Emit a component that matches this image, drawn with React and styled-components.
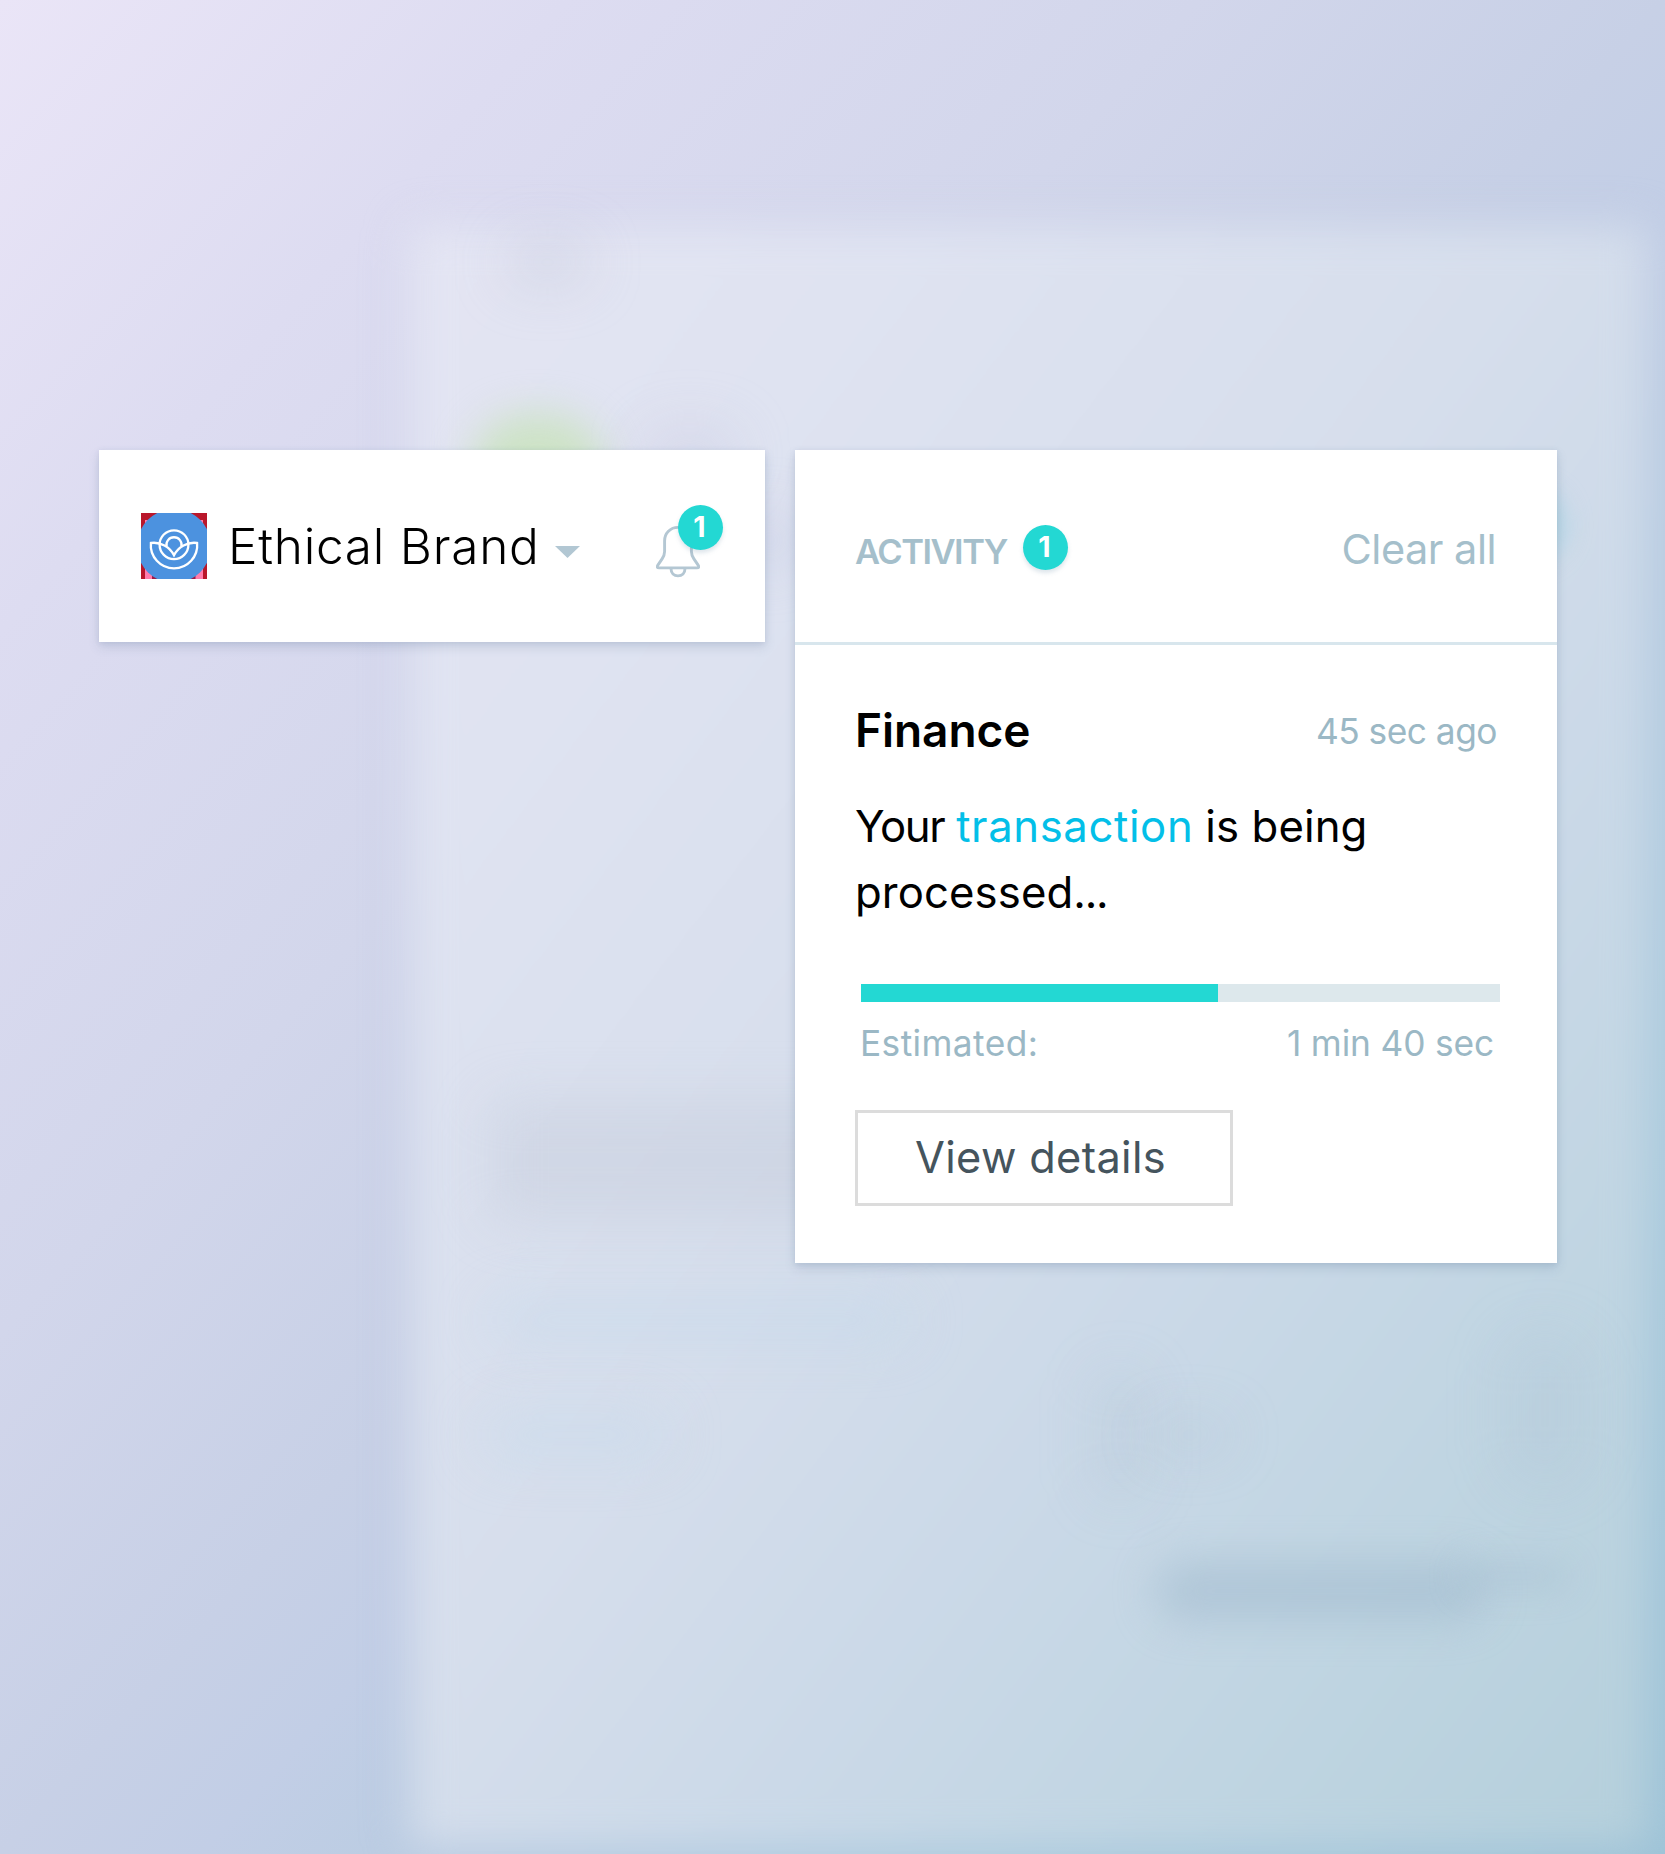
import React from "react";
import styled, { createGlobalStyle } from "styled-components";

const Global = createGlobalStyle`
  *, *::before, *::after { box-sizing: border-box; }
  body {
    margin: 0;
    font-family: Inter, "Liberation Sans", sans-serif;
    -webkit-font-smoothing: antialiased;
  }
`;

const c = {
  teal: "#23d8d3",
  muted: "#a5bfcb",
  mutedDark: "#9bb8c5",
  icon: "#b4c7d3",
  line: "#d8e6ed",
};

const Stage = styled.main`
  position: relative;
  isolation: isolate;
  overflow: hidden;
  width: 1665px;
  height: 1854px;
  padding: 450px 108px 0 99px;
  display: flex;
  align-items: flex-start;
  gap: 30px;
  background: linear-gradient(
    to bottom right,
    #eae5f7 0%,
    #dddcf1 17%,
    #d2d6eb 36%,
    #c7d0e6 50%,
    #c2cee6 56%,
    #bccde3 61%,
    #aecddf 78%,
    #9ec4d8 100%
  );
`;

/* Out-of-focus app window floating behind the cards */
const Backdrop = styled.div`
  position: absolute;
  inset: 0;
  z-index: -1;
`;

const GhostWindow = styled.div`
  position: absolute;
  left: 410px;
  top: 226px;
  width: 1238px;
  height: 1622px;
  border-radius: 8px;
  filter: blur(20px);
  background: linear-gradient(
    to bottom right,
    #e4e5f3 0%,
    #dfe3f1 20%,
    #d6deec 46%,
    #cbd9e8 63%,
    #c0d5e2 80%,
    #b4cfdb 100%
  );
  box-shadow: 0 6px 40px rgba(130, 150, 195, 0.1);
`;

const Smudge = styled.div`
  position: absolute;
  left: ${(p) => p.$x}px;
  top: ${(p) => p.$y}px;
  width: ${(p) => p.$w}px;
  height: ${(p) => p.$h}px;
  border-radius: ${(p) => p.$r ?? 40}px;
  background: ${(p) => p.$color};
  filter: blur(${(p) => p.$blur ?? 26}px);
`;

const Card = styled.section`
  background: #fff;
  box-shadow: 0 5px 10px rgba(90, 115, 150, 0.2), 0 1px 5px rgba(90, 115, 150, 0.12);
`;

const BrandBar = styled(Card)`
  width: 666px;
  height: 192px;
  padding: 0 65px 0 42px;
  display: flex;
  align-items: center;
`;

const Logo = styled.svg`
  display: block;
  flex: none;
  width: 66px;
  height: 66px;
`;

const BrandName = styled.h1`
  margin: 0 0 0 21px;
  font-size: 49.5px;
  font-weight: 300;
  line-height: 66px;
  letter-spacing: 0.75px;
  color: #000;
  white-space: nowrap;
`;

const Caret = styled.svg`
  display: block;
  flex: none;
  width: 25px;
  height: 12px;
  margin: 12px 0 0 15px;
`;

const BellButton = styled.button`
  position: relative;
  flex: none;
  width: 44px;
  height: 54px;
  margin: 11px 0 0 auto;
  padding: 0;
  border: 0;
  background: none;
`;

const BellSvg = styled.svg`
  display: block;
`;

const Badge = styled.span`
  display: flex;
  flex: none;
  align-items: center;
  justify-content: center;
  width: 45px;
  height: 45px;
  border-radius: 50%;
  background: ${c.teal};
  color: #fff;
  font-family: Inter, "Liberation Sans", sans-serif;
  font-size: 28.5px;
  font-weight: 700;
  line-height: 1;
  padding: 1px 2px 0 0;
  box-shadow: 0 3px 4px rgba(120, 150, 175, 0.25);
`;

const BellBadge = styled(Badge)`
  position: absolute;
  left: 22px;
  top: -20px;
`;

const ActivityCard = styled(Card)`
  width: 762px;
  height: 813px;
`;

const CardHeader = styled.header`
  height: 195px;
  padding: 3px 61px 0 60px;
  display: flex;
  align-items: center;
  justify-content: space-between;
  border-bottom: 3px solid ${c.line};
`;

const HeaderTitle = styled.div`
  display: flex;
  align-items: center;
`;

const Overline = styled.h2`
  margin: 8px 16px 0 0;
  font-size: 34.5px;
  font-weight: 600;
  line-height: 42px;
  letter-spacing: -1.5px;
  color: ${c.muted};
`;

const HeaderBadge = styled(Badge)`
  margin-top: -1px;
`;

const ClearAll = styled.button`
  margin: 3px 0 0;
  padding: 0;
  border: 0;
  background: none;
  font: 400 41.5px/48px Inter, "Liberation Sans", sans-serif;
  letter-spacing: -0.5px;
  color: ${c.muted};
`;

const Notice = styled.article`
  padding: 55px 57px 0 60px;
`;

const NoticeHead = styled.div`
  display: flex;
  align-items: center;
  justify-content: space-between;
  padding-right: 3px;
  height: 60px;
`;

const NoticeTitle = styled.h3`
  margin: 0;
  font-size: 46px;
  font-weight: 600;
  line-height: 60px;
  letter-spacing: -0.05px;
  color: #000;
`;

const Meta = styled.span`
  font-size: 35.3px;
  line-height: 42px;
  letter-spacing: ${(p) => p.$track ?? 0}px;
  color: ${c.mutedDark};
  white-space: nowrap;
`;

const Timestamp = styled(Meta)`
  margin-top: 4px;
`;

const Message = styled.p`
  margin: 34px 0 0;
  font-size: 43.7px;
  line-height: 66px;
  color: #000;
`;

const MessageLine = styled.span`
  display: flex;
  gap: ${(p) => p.$gap ?? 0}px;
  white-space: nowrap;
`;

const Words = styled.span`
  letter-spacing: ${(p) => p.$track}px;
`;

const Link = styled.a`
  color: #03bfe8;
  letter-spacing: 0.6px;
`;

const Progress = styled.div`
  margin: 58px 0 0 6px;
  width: 639px;
  height: 18px;
  background: #dde8ec;
`;

const ProgressFill = styled.div`
  height: 100%;
  background: ${c.teal};
`;

const Estimate = styled.div`
  display: flex;
  justify-content: space-between;
  margin: 21px 6px 0 5px;
  height: 42px;
`;

const DetailsButton = styled.button`
  display: block;
  width: 378px;
  height: 96px;
  margin-top: 45px;
  padding: 0 7px 2px 0;
  border: 3px solid #dcdcdc;
  background: #fff;
  font: 400 43.3px/60px Inter, "Liberation Sans", sans-serif;
  letter-spacing: 0.35px;
  color: #45545d;
  text-align: center;
`;

const BrandLogo = () => (
  <Logo viewBox="0 0 66 66">
    <rect width="66" height="66" fill="#b9172b" />
    <rect x="11" y="7" width="44" height="59" fill="#9d1b45" />
    <rect x="4" y="7" width="7" height="59" fill="#ff7cac" />
    <rect x="54.5" y="7" width="7.5" height="59" fill="#ff7cac" />
    <circle cx="33" cy="33" r="37" fill="#4c92df" />
    <g fill="none" stroke="#fff" strokeWidth="2.3" strokeLinejoin="miter">
      <circle cx="33" cy="31.7" r="14.4" />
      <path d="M25.6 33.6 A7.6 7.6 0 1 1 40.4 33.6" />
      <path d="M9.9 30 A23.2 23.2 0 1 0 56.1 30 C46.5 28.6 37.2 34 33 42.3 C28.8 34 19.5 28.6 9.9 30 Z" />
    </g>
  </Logo>
);

const Bell = () => (
  <BellSvg width="44" height="54" viewBox="0 0 44 54" fill="none" stroke={c.icon} strokeWidth="2.9" strokeLinejoin="round" strokeLinecap="round">
    <path d="M22 2.4 C14.3 2.4 8.6 8.4 8.6 15.8 V26.5 C8.6 29.5 7.6 31.6 6.1 33.9 L1.7 40.4 C0.7 42 1.2 42.9 3 42.9 H41 C42.8 42.9 43.3 42 42.3 40.4 L37.9 33.9 C36.4 31.6 35.4 29.5 35.4 26.5 V15.8 C35.4 8.4 29.7 2.4 22 2.4 Z" />
    <path d="M15 43.6 C15 48 18 50.9 22 50.9 C26 50.9 29 48 29 43.6" />
  </BellSvg>
);

const smudges = [
  { $x: 505, $y: 240, $w: 85, $h: 45, $color: "rgba(190,195,215,0.35)" },
  { $x: 470, $y: 414, $w: 136, $h: 116, $r: 68, $color: "rgba(200,226,186,0.8)", $blur: 19 },
  { $x: 640, $y: 425, $w: 100, $h: 60, $color: "rgba(195,197,222,0.3)" },
  { $x: 740, $y: 510, $w: 60, $h: 60, $color: "rgba(190,196,222,0.4)" },
  { $x: 1480, $y: 490, $w: 85, $h: 70, $color: "rgba(155,210,225,0.6)", $blur: 13 },
  { $x: 490, $y: 1100, $w: 420, $h: 120, $r: 16, $color: "rgba(198,203,220,0.45)" },
  { $x: 490, $y: 1300, $w: 420, $h: 40, $color: "rgba(196,217,236,0.5)" },
  { $x: 480, $y: 1410, $w: 190, $h: 50, $color: "rgba(196,217,236,0.4)" },
  { $x: 1095, $y: 1370, $w: 50, $h: 130, $color: "rgba(170,190,208,0.25)" },
  { $x: 1150, $y: 1420, $w: 80, $h: 30, $color: "rgba(170,190,208,0.3)" },
  { $x: 1500, $y: 1330, $w: 90, $h: 160, $color: "rgba(170,192,208,0.2)" },
  { $x: 1155, $y: 1562, $w: 330, $h: 58, $color: "rgba(160,186,206,0.55)", $blur: 20 },
  { $x: 1460, $y: 1562, $w: 110, $h: 28, $color: "rgba(160,186,206,0.35)", $blur: 16 },
];

export default function App() {
  return (
    <>
      <Global />
      <Stage>
        <Backdrop aria-hidden="true">
          <GhostWindow />
          {smudges.map((s, i) => (
            <Smudge key={i} {...s} />
          ))}
        </Backdrop>

        <BrandBar>
          <BrandLogo />
          <BrandName>Ethical Brand</BrandName>
          <Caret viewBox="0 0 25 12">
            <path d="M0 0 H25 L12.5 12 Z" fill="#b2c7d3" />
          </Caret>
          <BellButton aria-label="Notifications">
            <Bell />
            <BellBadge>1</BellBadge>
          </BellButton>
        </BrandBar>

        <ActivityCard>
          <CardHeader>
            <HeaderTitle>
              <Overline>ACTIVITY</Overline>
              <HeaderBadge>1</HeaderBadge>
            </HeaderTitle>
            <ClearAll>Clear all</ClearAll>
          </CardHeader>
          <Notice>
            <NoticeHead>
              <NoticeTitle>Finance</NoticeTitle>
              <Timestamp $track={-0.5}>45 sec ago</Timestamp>
            </NoticeHead>
            <Message>
              <MessageLine $gap={12}>
                <Words $track={-1.4}>Your</Words>
                <Link>transaction</Link>
                <Words $track={0.1}>is being</Words>
              </MessageLine>
              <MessageLine>
                <Words $track={0.1}>processed</Words>
                <Words $track={-1.3}>...</Words>
              </MessageLine>
            </Message>
            <Progress>
              <ProgressFill style={{ width: `${(357 / 639) * 100}%` }} />
            </Progress>
            <Estimate>
              <Meta $track={0.4}>Estimated:</Meta>
              <Meta $track={-0.15}>1 min 40 sec</Meta>
            </Estimate>
            <DetailsButton>View details</DetailsButton>
          </Notice>
        </ActivityCard>
      </Stage>
    </>
  );
}
